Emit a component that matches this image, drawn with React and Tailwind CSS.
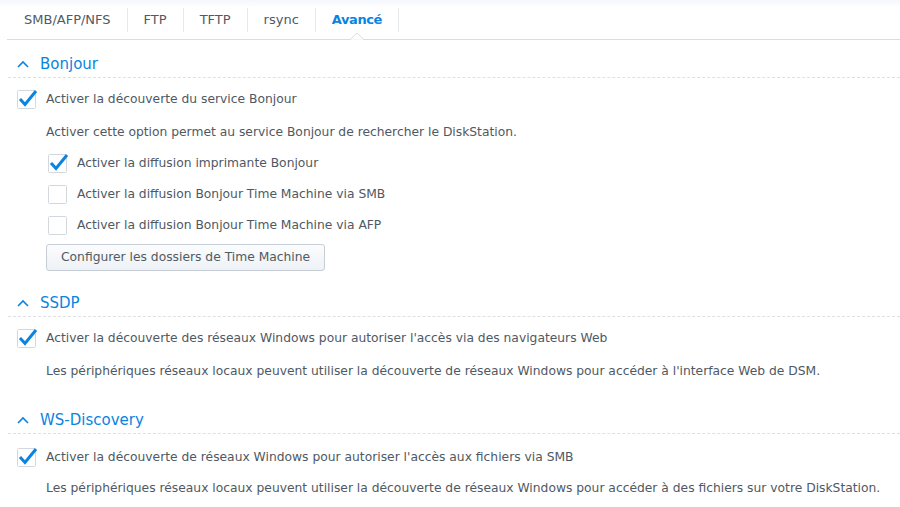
import { useState } from 'react';

const tabs = ['SMB/AFP/NFS', 'FTP', 'TFTP', 'rsync', 'Avancé'];

function App() {
  const [active, setActive] = useState('Avancé');
  const [values, setValues] = useState({
    bonjour: true,
    printer: true,
    tmSmb: false,
    tmAfp: false,
    ssdp: true,
    wsd: true,
  });

  function toggle(key) {
    setValues((prev) => ({ ...prev, [key]: !prev[key] }));
  }

  return (
    <div
      className="w-[900px] h-[507px] overflow-hidden bg-white text-[12.3px] text-[#4f5963]"
      style={{ fontFamily: '"DejaVu Sans", Verdana, sans-serif' }}
    >
      <div className="h-[8px] bg-gradient-to-b from-[#f4f7fb] to-white" />
      <div className="ml-[7px] flex border-b border-[#d9dde2] pb-[7px] pl-px">
        {tabs.map((tab) => (
          <button
            key={tab}
            onClick={() => setActive(tab)}
            className={`relative flex h-6 items-center border-r border-[#e6e9ec] px-4 text-[13px] ${
              active === tab ? 'font-bold tracking-[-0.4px] text-[#0a84e0]' : 'text-[#505a64]'
            }`}
          >
            {tab}
            {active === tab && (
              <svg
                className="absolute bottom-[-8px] left-1/2 -translate-x-1/2"
                width="14"
                height="8"
                viewBox="0 0 14 8"
              >
                <polyline points="0,7.5 7,1 14,7.5" fill="#fff" stroke="#d9dde2" strokeWidth="1" />
                <rect x="1" y="7.5" width="12" height="1" fill="#fff" />
              </svg>
            )}
          </button>
        ))}
      </div>

      <Section title="Bonjour" className="mt-[7px]">
        <CheckRow checked={values.bonjour} onChange={() => toggle('bonjour')}>
          Activer la découverte du service Bonjour
        </CheckRow>
        <Desc shift>Activer cette option permet au service Bonjour de rechercher le DiskStation.</Desc>
        <div className="pl-[31px] pt-px">
          <CheckRow checked={values.printer} onChange={() => toggle('printer')}>
            Activer la diffusion imprimante Bonjour
          </CheckRow>
          <CheckRow checked={values.tmSmb} onChange={() => toggle('tmSmb')}>
            Activer la diffusion Bonjour Time Machine via SMB
          </CheckRow>
          <CheckRow checked={values.tmAfp} onChange={() => toggle('tmAfp')}>
            Activer la diffusion Bonjour Time Machine via AFP
          </CheckRow>
        </div>
        <div className="pl-[46px] pt-[3px]">
          <button className="h-[27px] rounded-[3px] border border-[#c6cdd5] bg-gradient-to-b from-[#fbfcfd] to-[#eef2f6] px-[14px] text-[12.3px] text-[#505a64]">
            Configurer les dossiers de Time Machine
          </button>
        </div>
      </Section>

      <Section title="SSDP" className="mt-[15px]">
        <CheckRow checked={values.ssdp} onChange={() => toggle('ssdp')}>
          Activer la découverte des réseaux Windows pour autoriser l'accès via des navigateurs Web
        </CheckRow>
        <Desc shift>
          Les périphériques réseaux locaux peuvent utiliser la découverte de réseaux Windows pour accéder à
          l'interface Web de DSM.
        </Desc>
      </Section>

      <Section title="WS-Discovery" className="mt-[17px]" bodyClass="pt-[8px]">
        <CheckRow checked={values.wsd} onChange={() => toggle('wsd')}>
          Activer la découverte de réseaux Windows pour autoriser l'accès aux fichiers via SMB
        </CheckRow>
        <Desc>
          Les périphériques réseaux locaux peuvent utiliser la découverte de réseaux Windows pour accéder à des
          fichiers sur votre DiskStation.
        </Desc>
      </Section>
    </div>
  );
}

function Section({ title, className, bodyClass = 'pt-[6px]', children }) {
  return (
    <div className={className}>
      <div className="ml-[8px] flex h-[31px] items-center gap-[11px] border-b border-dashed border-[#dde1e5] pl-[9px] pt-[4px]">
        <svg width="12" height="8" viewBox="0 0 12 8" fill="none">
          <polyline points="1,7 6,2 11,7" stroke="#0a84e0" strokeWidth="1.6" />
        </svg>
        <span className="text-[15px] text-[#0a84e0]">{title}</span>
      </div>
      <div className={bodyClass}>{children}</div>
    </div>
  );
}

function CheckRow({ checked, onChange, children }) {
  return (
    <label className="flex h-[31px] cursor-pointer items-center pl-[17px]">
      <span className="relative mr-[10px] h-[19px] w-[19px] shrink-0">
        <svg width="22" height="22" viewBox="0 0 22 22" className="absolute left-0 top-[-3px]" fill="none">
          <rect x="0.5" y="3.5" width="18" height="18" rx="1" fill="#fff" stroke="#d3d8de" />
          {checked && (
            <polyline
              points="3,12 8,17.5 19,4"
              stroke="#0a84e0"
              strokeWidth="3"
              strokeLinecap="butt"
              strokeLinejoin="miter"
            />
          )}
        </svg>
        <input type="checkbox" className="hidden" checked={checked} onChange={onChange} />
      </span>
      <span>{children}</span>
    </label>
  );
}

function Desc({ shift, children }) {
  return (
    <div className={`flex items-center pl-[46px] ${shift ? 'h-[32px] pt-[2px]' : 'h-[31px]'}`}>{children}</div>
  );
}

export default App;
